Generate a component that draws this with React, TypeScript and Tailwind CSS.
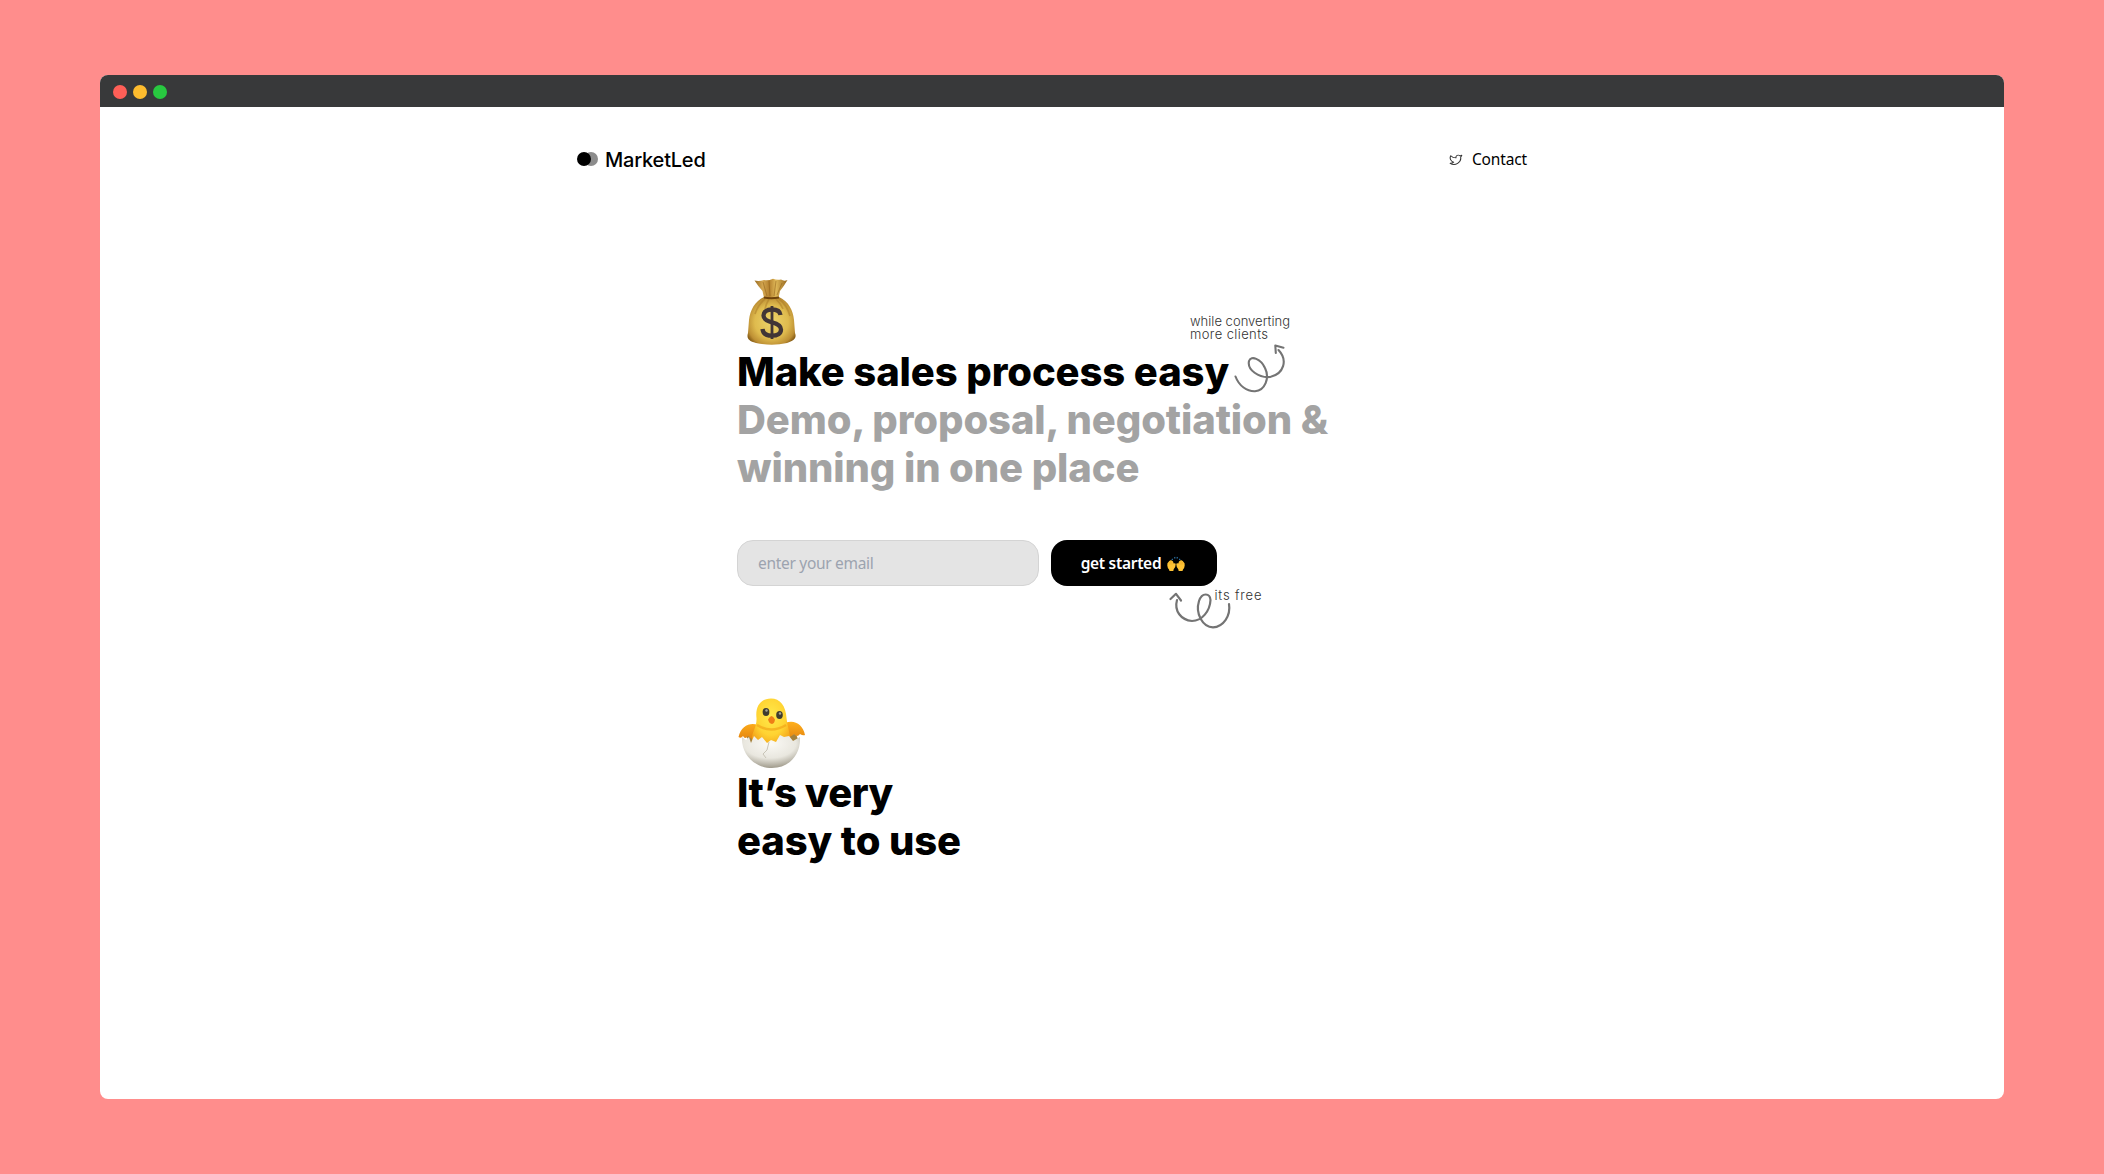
import React from "react";

function LogoMark() {
  return (
    <svg width="21" height="14" viewBox="0 0 21 14">
      <circle cx="14" cy="7" r="7" fill="#8c8c8c" />
      <circle cx="7" cy="7" r="7" fill="#000" />
    </svg>
  );
}

function TwitterIcon() {
  return (
    <svg width="14" height="13" viewBox="0 0 24 24" preserveAspectRatio="none" fill="none" stroke="#333" strokeWidth="1.8" strokeLinecap="round" strokeLinejoin="round">
      <path d="M22 4s-.7 2.1-2 3.4c1.6 10-9.4 17.3-18 11.6 2.2.1 4.4-.6 6-2C3 15.5 .5 9.6 3 5c2.2 2.6 5.6 4.1 9 4-.9-4.2 4-6.6 7-3.8 1.1 0 3-1.2 3-1.2z" />
    </svg>
  );
}

function MoneyBag() {
  return (
    <svg width="50" height="68" viewBox="0 0 50 68">
      <defs>
        <radialGradient id="bag" cx="50%" cy="52%" r="58%">
          <stop offset="0" stopColor="#ecd36a" />
          <stop offset="0.6" stopColor="#dfbb4e" />
          <stop offset="0.88" stopColor="#bd8f34" />
          <stop offset="1" stopColor="#8a6018" />
        </radialGradient>
        <linearGradient id="neck" x1="0" x2="1" y1="0" y2="0">
          <stop offset="0" stopColor="#9a6c22" />
          <stop offset="0.25" stopColor="#d3a650" />
          <stop offset="0.45" stopColor="#b5822f" />
          <stop offset="0.65" stopColor="#dfb858" />
          <stop offset="1" stopColor="#94651d" />
        </linearGradient>
      </defs>
      <path d="M7.500 2.500Q12 3.500 17 2Q21 3 26 .8Q30 2.500 34 1.500Q37 3.500 40.500 2Q37 8 33 13L31.500 20H17L15.500 13Q11 8 7.500 2.500Z" fill="url(#neck)" />
      <path d="M16 4L20 18M22 3L23 18M29 3L27 18M35 5L30 17" stroke="#8c5d18" strokeWidth="1" opacity=".5" />
      <path d="M17 19H32C42 24 46 32 47 42L48 55C50 60 47 63 40 65Q25 68.500 9 65C1 63 -.5 60 1 55L2 42C3 32 8 23 17 19Z" fill="url(#bag)" />
      <path d="M18 21Q11 27 8 36M22 21Q19 26 18 31M29 21Q34 26 36 31M32 21Q40 27 43 38" fill="none" stroke="#a97a25" strokeWidth="1.600" opacity=".5" />
      <path d="M17 19.500Q24 21 32 19.500" fill="none" stroke="#6f430b" strokeWidth="2" />
      <path d="M33.500 37C33 33 30 31.500 25 31.500C19.500 31.500 16.500 34 16.500 37.500C16.500 41.500 20 43 25 44.300C31 45.800 34 47.500 34 51.500C34 55.500 30.500 57.700 25 57.700C19.500 57.700 16 55.500 15.500 51" fill="none" stroke="#413536" strokeWidth="4.300" />
      <path d="M25 28V61" stroke="#413536" strokeWidth="2.800" />
    </svg>
  );
}

function Chick() {
  return (
    <svg width="68" height="71" viewBox="0 0 68 71">
      <defs>
        <radialGradient id="chick" cx="50%" cy="35%" r="65%">
          <stop offset="0" stopColor="#ffe94a" />
          <stop offset="0.6" stopColor="#ffd332" />
          <stop offset="1" stopColor="#f3a118" />
        </radialGradient>
        <linearGradient id="wing" x1="0" x2="0" y1="0" y2="1">
          <stop offset="0" stopColor="#ffb01c" />
          <stop offset="1" stopColor="#e5850f" />
        </linearGradient>
        <radialGradient id="shell" cx="48%" cy="25%" r="75%">
          <stop offset="0" stopColor="#fbfaf6" />
          <stop offset="0.6" stopColor="#e9e7df" />
          <stop offset="1" stopColor="#a09b8c" />
        </radialGradient>
      </defs>
      <path d="M8 38L58 36L61 44L50 48H14Z" fill="#a5813b" />
      <path d="M20 27C12 24 3 28 .5 39Q3 41 5 38Q7 42 10 38Q14 42 20 41ZM47 25C56 21 65 26 67 37Q65 38 62 36Q59 40 56 36Q52 40 46 39Z" fill="url(#wing)" />
      <path d="M18.500 20C17 7 24 .5 33 .5C42 .5 48 8 48.500 20C49 26 51 32 52 38L51 50H15L14 40C14 34 19 29 18.500 20Z" fill="url(#chick)" />
      <path d="M19 27Q33 36 48 27" fill="none" stroke="#ee9910" strokeWidth="2.500" opacity=".55" />
      <ellipse cx="28" cy="14" rx="3.400" ry="4" fill="#3f3c30" />
      <ellipse cx="41.500" cy="17" rx="3.300" ry="4" fill="#3f3c30" />
      <circle cx="28.500" cy="12.500" r="1.200" fill="#a8a797" />
      <circle cx="42" cy="15.500" r="1.200" fill="#a8a797" />
      <path d="M30 21.500Q33.500 14.500 37 21.500Q36.500 25.500 34 26Q31 25.500 30 21.500Z" fill="#ef7e16" />
      <path d="M4 39L8 42L11 39L13 45L16 38L20 42L24 39L29 45L33 42L38 44L42 37L46 39L51 38L55 43L62 39C63 57 51 70 34 70C17 70 3 57 4 39Z" fill="url(#shell)" />
      <path d="M31 44L29 52L25 56L28 60" fill="none" stroke="#c8c4b7" strokeWidth="1" />
    </svg>
  );
}

function RaisedHands() {
  return (
    <svg width="18" height="16" viewBox="0 0 18 16">
      <path d="M4.800 3L5.800 3.800M7.600 1L8 2.500M10.400 1L10 2.500M13.200 3L12.200 3.800" stroke="#2f78ad" strokeWidth="1.100" />
      <path d="M.3 9.500Q.1 6.500 1.300 6.200L2.300 5L3.500 4.300L4.800 4.400L6 5.400L6.700 7.500Q8.700 6.500 8.700 8.500Q8.500 12 6.700 13.300L6.300 15H2.500L2 13.500Q.5 12 .3 9.500ZM17.700 9.500Q17.900 6.500 16.700 6.200L15.700 5L14.500 4.300L13.200 4.400L12 5.400L11.300 7.500Q9.300 6.500 9.300 8.500Q9.500 12 11.300 13.300L11.700 15H15.500L16 13.500Q17.500 12 17.700 9.500Z" fill="#ffc335" />
      <path d="M2.300 6V8.500M3.700 5V8.500M5 5.200V8.500M15.700 6V8.500M14.300 5V8.500M13 5.200V8.500" stroke="#e9a526" strokeWidth=".5" />
    </svg>
  );
}

function HeadlineNote() {
  return (
    <svg className="absolute left-[449px] top-[-35px] overflow-visible" width="110" height="82" viewBox="1186 313 110 82" fill="none">
      <g fill="#333" fontFamily="Inter, sans-serif" fontSize="13" fontWeight="300">
        <text x="1190" y="326" textLength="100">while converting</text>
        <text x="1190" y="339" textLength="78">more clients</text>
      </g>
      <path d="M1235.500 376.500C1239 386 1247 391.500 1255 391.200C1265 390.500 1270 378 1265 368C1261 359 1251 355 1249 361C1247 370 1259 378 1270 377C1284 374 1288 360 1278.500 350" stroke="#747474" strokeWidth="2.100" strokeLinecap="round" />
      <path d="M1275.800 353L1275.300 345.500L1283.500 347.700" stroke="#747474" strokeWidth="2.100" strokeLinecap="round" strokeLinejoin="round" />
    </svg>
  );
}

function ButtonNote() {
  return (
    <svg className="absolute left-[115px] top-[46px] overflow-visible" width="100" height="44" viewBox="1166 586 100 44" fill="none">
      <text x="1214.500" y="600" textLength="47" fill="#333" fontFamily="Inter, sans-serif" fontSize="13" fontWeight="300">its free</text>
      <path d="M1229 604C1231 616 1223 627 1213 627.300C1203 627 1195 614 1199 601C1202 592 1210 593 1210.500 600C1210 611 1202 621 1192 621C1181 620 1174 611 1177 600" stroke="#747474" strokeWidth="2.200" strokeLinecap="round" />
      <path d="M1170.500 599L1176 593.800L1181 600.500" stroke="#747474" strokeWidth="2.200" strokeLinecap="round" strokeLinejoin="round" />
    </svg>
  );
}

export default function App() {
  return (
    <div className="h-[1174px] w-[2104px] overflow-hidden bg-[#ff8d8c] px-[100px] pt-[75px] font-['Inter',sans-serif]">
      <div className="h-[1024px] overflow-hidden rounded-lg bg-white">
        <div className="flex h-8 items-center gap-[6px] bg-[#38393a] pl-[13px] pt-[2px]">
          <span className="size-[14px] rounded-full bg-[#ff5f57]" />
          <span className="size-[14px] rounded-full bg-[#febc2e]" />
          <span className="size-[14px] rounded-full bg-[#28c840]" />
        </div>

        <header className="mx-auto flex h-[104px] w-[950px] items-center justify-between">
          <a className="flex items-center gap-[7px] text-[20px] font-medium leading-6 text-black">
            <LogoMark />
            <span className="pt-px tracking-[-0.2px]">MarketLed</span>
          </a>
          <a className="flex items-center gap-[9px] font-['Noto_Sans',sans-serif] text-[15.5px] leading-6 tracking-[-0.15px] text-black">
            <TwitterIcon />
            <span>Contact</span>
          </a>
        </header>

        <main className="ml-[637px] w-[640px]">
          <section className="pt-[67px]">
            <div className="h-[70px] pl-[10px]"><MoneyBag /></div>
            <div className="relative">
              <h1 className="whitespace-nowrap text-[40px] font-extrabold leading-[48px] tracking-[-0.1px] text-black">
                Make sales process easy
                <span className="block text-[#a3a3a3]">Demo, proposal, negotiation &amp;<br />winning in one place</span>
              </h1>
              <HeadlineNote />
            </div>
            <form className="mt-[48px] flex h-[46px] gap-3 font-['Noto_Sans',sans-serif]">
              <input
                placeholder="enter your email"
                className="w-[302px] rounded-[16px] border border-[#d4d4d4] bg-[#e4e4e4] px-5 pt-[2px] text-[15.5px] tracking-[-0.3px] outline-none placeholder:text-[#9ca3af]"
              />
              <div className="relative">
                <button type="button" className="flex h-[46px] w-[166px] items-center justify-center gap-[6px] rounded-[16px] bg-black pr-[2px] pt-[2px] text-[15.5px] font-semibold tracking-[-0.3px] text-white">
                  <span>get started</span>
                  <RaisedHands />
                </button>
                <ButtonNote />
              </div>
            </form>
          </section>

          <section className="pt-[112px]">
            <div className="h-[71px] pl-px"><Chick /></div>
            <h2 className="text-[40px] font-extrabold leading-[48px] text-black">
              <span className="block tracking-[-0.5px]">It’s very</span>
              <span className="block tracking-[-0.1px]">easy to use</span>
            </h2>
          </section>
        </main>
      </div>
    </div>
  );
}
